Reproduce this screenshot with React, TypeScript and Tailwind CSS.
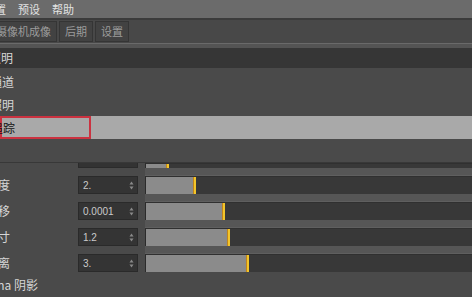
import React from "react";

const menuItems = ["设置", "预设", "帮助"];
const tabs = [
  { label: "摄像机成像", className: "ml-[-10px]" },
  { label: "后期", className: "" },
  { label: "设置", className: "" },
];

const listRows = ["信息通道", "直接照明", "路径追踪"];

const params = [
  { label: "漫射深度", value: "2.", fill: "w-[47px]" },
  { label: "光线偏移", value: "0.0001", fill: "w-[76px]" },
  { label: "过滤尺寸", value: "1.2", fill: "w-[81px]" },
  { label: "AO 距离", value: "3.", fill: "w-[100px]" },
];

const Spinner = () => (
  <svg width="5" height="9" viewBox="0 0 5 9" className="shrink-0">
    <path d="M2.5 0.5 L4.5 3.5 L0.5 3.5 Z" fill="#8a8a8a" />
    <path d="M0.5 5.5 L4.5 5.5 L2.5 8.5 Z" fill="#8a8a8a" />
  </svg>
);

const Track = ({ fill }: { fill: string }) => (
  <div className="flex h-full w-full bg-[#383838] border-l border-[#2b2b2b] border-t border-t-[#303030]">
    <div className={`${fill} h-full bg-[#8b8b8b] shrink-0`} />
    <div className="w-[1px] h-full bg-[#c0841c] shrink-0" />
    <div className="w-[2px] h-full bg-[#f2c52a] shrink-0" />
  </div>
);

export default function App() {
  return (
    <div className="w-[472px] h-[297px] overflow-hidden bg-[#4a4a4a] font-['Noto_Sans_CJK_SC',sans-serif] select-none">
      {/* menu bar */}
      <div className="h-[20px] bg-[#6b6b6b] border-b-2 border-[#3b3b3b] flex items-center gap-[12px] text-[11px] leading-none text-[#e2e2e2]">
        {menuItems.map((m, i) => (
          <span key={m} className={`whitespace-nowrap ${i === 0 ? "ml-[-16px]" : ""}`}>
            {m}
          </span>
        ))}
      </div>

      {/* tab bar */}
      <div className="h-[23px] bg-[#484848] flex items-stretch gap-[2px] py-[1px]">
        {tabs.map((t) => (
          <div
            key={t.label}
            className={`${t.className} flex items-center px-[5px] bg-[#424242] border border-[#353535] text-[11px] leading-none text-[#9c9c9c] whitespace-nowrap`}
          >
            {t.label}
          </div>
        ))}
      </div>

      <div className="h-[5px] bg-[#545454] border-t border-[#6a6a6a]" />

      {/* list */}
      <div className="h-[20px] bg-[#363636] flex items-center text-[12px] text-[#d6d6d6]">
        <div className="w-[13px] flex justify-end whitespace-nowrap">直接照明</div>
      </div>
      <div className="h-[2px]" />
      {listRows.map((r, i) =>
        i === 2 ? (
          <div key={r} className="h-[23px] bg-[#a9a9a9] flex">
            <div className="w-[91px] h-full border-2 border-[#cb3240] flex items-center text-[12px] text-[#151515]">
              <div className="w-[13px] flex justify-end whitespace-nowrap">{r}</div>
            </div>
          </div>
        ) : (
          <div key={r} className="h-[23px] flex items-center text-[12px] text-[#d6d6d6]">
            <div className="w-[14px] flex justify-end whitespace-nowrap">{r}</div>
          </div>
        )
      )}
      <div className="h-[23px]" />

      {/* params */}
      <div className="border-t border-[#383838]">
        {/* partial row cut off at top */}
        <div className="h-[5px] flex">
          <div className="w-[78px] shrink-0" />
          <div className="w-[60px] shrink-0 bg-[#333333] border-x border-b border-[#2b2b2b]" />
          <div className="w-[7px] shrink-0" />
          <div className="flex-1">
            <Track fill="w-[20px]" />
          </div>
        </div>

        {params.map((p) => (
          <div key={p.label} className="h-[26px] flex">
            <div className="w-[78px] shrink-0 pt-[8px] flex">
              <div className="w-[10px] h-[18px] flex items-center justify-end whitespace-nowrap text-[12px] text-[#d6d6d6]">
                {p.label}
              </div>
            </div>
            <div className="w-[60px] shrink-0 pt-[8px]">
              <div className="h-[18px] bg-[#343434] border border-[#2a2a2a] flex items-center justify-between pl-[4px] pr-[3px] font-['Liberation_Sans',sans-serif] text-[10px] text-[#cacaca]">
                <span>{p.value}</span>
                <Spinner />
              </div>
            </div>
            <div className="w-[7px] shrink-0" />
            <div className="flex-1 flex flex-col">
              <div className="h-[8px] bg-[#565656] border-b border-[#5f5f5f]" />
              <div className="h-[18px]">
                <Track fill={p.fill} />
              </div>
            </div>
          </div>
        ))}

        <div className="h-[25px] flex items-center text-[12px] text-[#d6d6d6]">
          <div className="w-[38px] flex justify-end whitespace-nowrap">Alpha 阴影</div>
        </div>
      </div>
    </div>
  );
}
